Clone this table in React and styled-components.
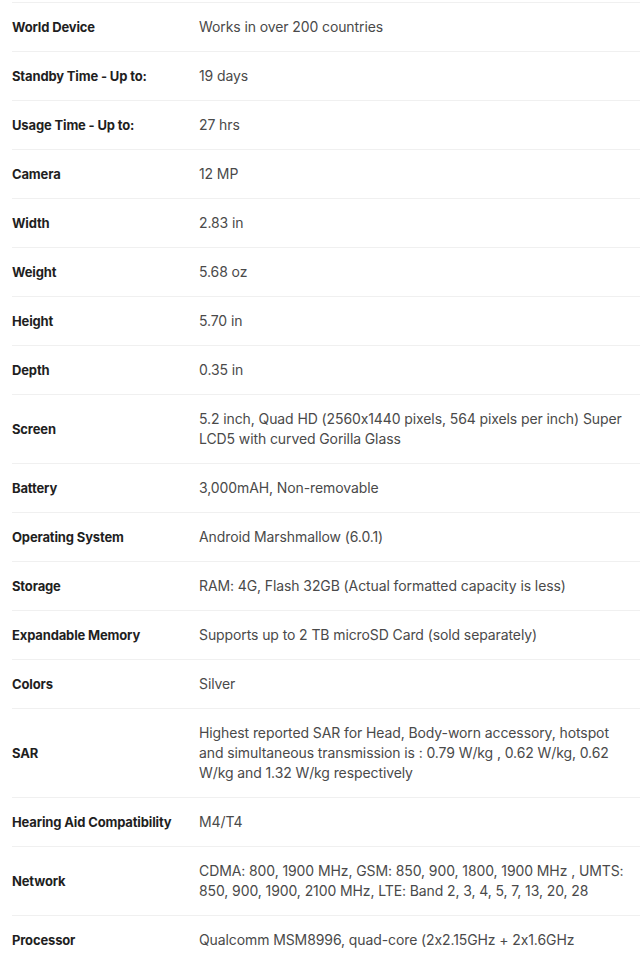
import React from 'react';
import styled, { createGlobalStyle } from 'styled-components';

const GlobalStyle = createGlobalStyle`
  html, body {
    margin: 0;
    padding: 0;
    background: #ffffff;
  }
  body {
    font-family: Inter, "Liberation Sans", Arial, sans-serif;
    -webkit-font-smoothing: antialiased;
  }
`;

const Specs = styled.div`
  padding: 2px 3px 0 12px;
`;

const Row = styled.div`
  display: grid;
  grid-template-columns: 187px 1fr;
  align-items: center;
  border-top: 1px solid #f0f0f0;
  padding: 14px 0;
`;

const Label = styled.div`
  font-size: 13px;
  line-height: 20px;
  font-weight: 700;
  letter-spacing: -0.15px;
  color: #1f1f1f;
`;

const Value = styled.div`
  font-size: 14px;
  line-height: 20px;
  font-weight: 400;
  letter-spacing: -0.1px;
  color: #4a4a4a;
  padding-right: 10px;
`;

const specs = [
  ['World Device', 'Works in over 200 countries'],
  ['Standby Time - Up to:', '19 days'],
  ['Usage Time - Up to:', '27 hrs'],
  ['Camera', '12 MP'],
  ['Width', '2.83 in'],
  ['Weight', '5.68 oz'],
  ['Height', '5.70 in'],
  ['Depth', '0.35 in'],
  ['Screen', '5.2 inch, Quad HD (2560x1440 pixels, 564 pixels per inch) Super LCD5 with curved Gorilla Glass'],
  ['Battery', '3,000mAH, Non-removable'],
  ['Operating System', 'Android Marshmallow (6.0.1)'],
  ['Storage', 'RAM: 4G, Flash 32GB (Actual formatted capacity is less)'],
  ['Expandable Memory', 'Supports up to 2 TB microSD Card (sold separately)'],
  ['Colors', 'Silver'],
  ['SAR', 'Highest reported SAR for Head, Body-worn accessory, hotspot and simultaneous transmission is : 0.79 W/kg , 0.62 W/kg, 0.62 W/kg and 1.32 W/kg respectively'],
  ['Hearing Aid Compatibility', 'M4/T4'],
  ['Network', 'CDMA: 800, 1900 MHz, GSM: 850, 900, 1800, 1900 MHz , UMTS: 850, 900, 1900, 2100 MHz, LTE: Band 2, 3, 4, 5, 7, 13, 20, 28'],
  ['Processor', 'Qualcomm MSM8996, quad-core (2x2.15GHz + 2x1.6GHz'],
];

const App = () => (
  <>
    <GlobalStyle />
    <Specs>
      {specs.map(([label, value]) => (
        <Row key={label}>
          <Label>{label}</Label>
          <Value>{value}</Value>
        </Row>
      ))}
    </Specs>
  </>
);

export default App;
